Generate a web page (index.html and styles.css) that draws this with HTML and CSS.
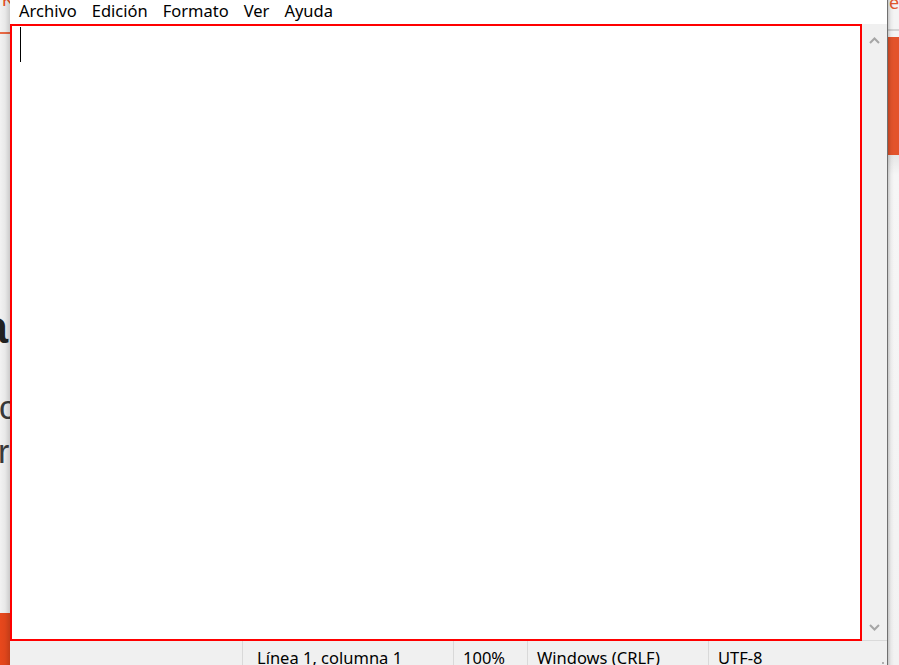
FILE: index.html
```html
<!DOCTYPE html>
<html lang="es">
<head>
<meta charset="utf-8">
<title>Bloc de notas</title>
<link rel="stylesheet" href="styles.css">
</head>
<body>
<div class="desktop">
  <div class="page-left">
    <div class="pl-top"><span class="pl-top-text">K</span></div>
    <div class="pl-rule"></div>
    <div class="pl-h"><span class="frag-h">Nota</span></div>
    <div class="pl-p1"><span class="frag-p1">ctica</span></div>
    <div class="pl-p2"><span class="frag-p2">r un</span></div>
    <div class="pl-foot"></div>
  </div>

  <div class="window">
    <nav class="menubar">
      <span class="menu-item">Archivo</span>
      <span class="menu-item">Edición</span>
      <span class="menu-item">Formato</span>
      <span class="menu-item">Ver</span>
      <span class="menu-item">Ayuda</span>
    </nav>
    <div class="main">
      <div class="editor"><span class="caret"></span></div>
      <div class="vscroll">
        <svg class="arrow arrow-up" width="11" height="7" viewBox="0 0 11 7"><polyline points="1,6 5.5,1.5 10,6" fill="none" stroke="#a6a6a6" stroke-width="2"/></svg>
        <svg class="arrow arrow-down" width="11" height="7" viewBox="0 0 11 7"><polyline points="1,1 5.5,5.5 10,1" fill="none" stroke="#a6a6a6" stroke-width="2"/></svg>
      </div>
    </div>
    <div class="statusbar">
      <div class="cell c0"></div>
      <div class="cell c1">Línea 1, columna 1</div>
      <div class="cell c2">100%</div>
      <div class="cell c3">Windows (CRLF)</div>
      <div class="cell c4">UTF-8<span class="grip"></span></div>
    </div>
  </div>

  <div class="page-right">
    <div class="pr-top"><span class="pr-top-text">ex</span></div>
    <div class="pr-rule"></div>
    <div class="pr-band"></div>
    <div class="pr-rest"></div>
  </div>
</div>
</body>
</html>
```

FILE: styles.css
```css
html, body {
  margin: 0;
  padding: 0;
  overflow: hidden;
  background: #f0f0f0;
}

.desktop {
  width: 899px;
  height: 665px;
  overflow: hidden;
  display: grid;
  grid-template-columns: 10px 878px 11px;
  font-family: "Noto Sans", "Open Sans", sans-serif;
}

/* ---------- background page, left strip ---------- */
.page-left {
  position: relative;
  display: flex;
  flex-direction: column;
  height: 665px;
  overflow: hidden;
  background: #f2f2f2;
  font-family: "Liberation Sans", Arial, sans-serif;
}
.page-left::after {
  content: "";
  position: absolute;
  inset: 0;
  background: linear-gradient(to right, rgba(0,0,0,0) 0%, rgba(0,0,0,0.04) 50%, rgba(0,0,0,0.16) 100%);
}
.pl-top {
  height: 8px;
  overflow: hidden;
  padding-left: 2px;
}
.pl-top-text {
  display: block;
  margin-top: -9px;
  font-size: 18px;
  line-height: 18px;
  color: #e8501f;
}
.pl-rule {
  margin-top: 24px;
  height: 2px;
  background: #ec6a45;
}
.pl-h, .pl-p1, .pl-p2 {
  display: flex;
  white-space: nowrap;
  overflow: hidden;
}
.pl-h {
  margin-top: 269px;
  height: 48px;
  font-size: 46px;
  line-height: 48px;
  font-weight: bold;
  color: #222;
  justify-content: flex-end;
}
.frag-h { margin-right: 2px; }
.pl-p1 {
  margin-top: 39px;
  height: 34px;
  font-size: 34px;
  line-height: 34px;
  color: #3a3a3a;
}
.frag-p1 { margin-left: -1px; }
.pl-p2 {
  margin-top: 10px;
  height: 34px;
  font-size: 34px;
  line-height: 34px;
  color: #3a3a3a;
}
.frag-p2 { margin-left: -2px; }
.pl-foot {
  margin-top: auto;
  height: 52px;
  background: #e8481c;
}

/* ---------- notepad window ---------- */
.window {
  display: flex;
  flex-direction: column;
  height: 700px;
  background: #ffffff;
  border-right: 1px solid #707070;
  box-sizing: border-box;
}
.menubar {
  height: 24px;
  flex: none;
  display: flex;
  padding-left: 1.5px;
  font-size: 16.5px;
  line-height: 21px;
  color: #000;
  background: #fff;
}
.menu-item {
  padding: 0 7.5px;
}
.main {
  height: 617px;
  flex: none;
  display: flex;
}
.editor {
  flex: 1;
  border: 2px solid #ff0000;
  background: #fff;
  padding: 1px 0 0 8px;
}
.caret {
  display: block;
  width: 1px;
  height: 35px;
  background: #000;
}
.vscroll {
  width: 25px;
  flex: none;
  display: flex;
  flex-direction: column;
  align-items: center;
  justify-content: space-between;
  background: #f0f0f0;
  border-bottom: 1px solid #dadada;
  box-sizing: border-box;
  padding: 13px 0 9px;
}
.arrow { display: block; margin-left: -1px; }

.statusbar {
  flex: 1;
  display: flex;
  background: #f0f0f0;
  font-size: 16.5px;
  color: #000;
  white-space: nowrap;
}
.cell {
  box-sizing: border-box;
  padding: 5px 0 0 9px;
  border-left: 1px solid #d9d9d9;
}
.c0 { width: 232px; border-left: none; padding: 0; }
.c1 { width: 211px; padding-left: 14px; }
.c2 { width: 74px; }
.c3 { width: 181px; }
.c4 { flex: 1; position: relative; }
.grip {
  position: absolute;
  right: 3px;
  top: 21px;
  width: 2px;
  height: 2px;
  background: #b0b0b0;
}

/* ---------- background page, right strip ---------- */
.page-right {
  position: relative;
  display: flex;
  flex-direction: column;
  height: 665px;
  overflow: hidden;
  background: #f4f4f4;
}
.page-right::before {
  content: "";
  position: absolute;
  inset: 0;
  background: linear-gradient(to right, rgba(0,0,0,0.18) 0px, rgba(0,0,0,0.04) 3px, rgba(0,0,0,0) 6px);
  z-index: 1;
}
.pr-top {
  height: 10px;
  overflow: hidden;
  padding-left: 1px;
  white-space: nowrap;
}
.pr-top-text {
  display: block;
  margin-top: -7px;
  font-size: 18px;
  line-height: 18px;
  color: #e4572e;
}
.pr-rule {
  margin-top: 19px;
  height: 2px;
  background: #d4d4d4;
}
.pr-band {
  margin-top: 6px;
  height: 118px;
  background: #e3532b;
}
.pr-rest {
  flex: 1;
  background: linear-gradient(to bottom, #e6e6e6 0px, #f6f6f6 20px, #f2f2f2 100%);
}
```
